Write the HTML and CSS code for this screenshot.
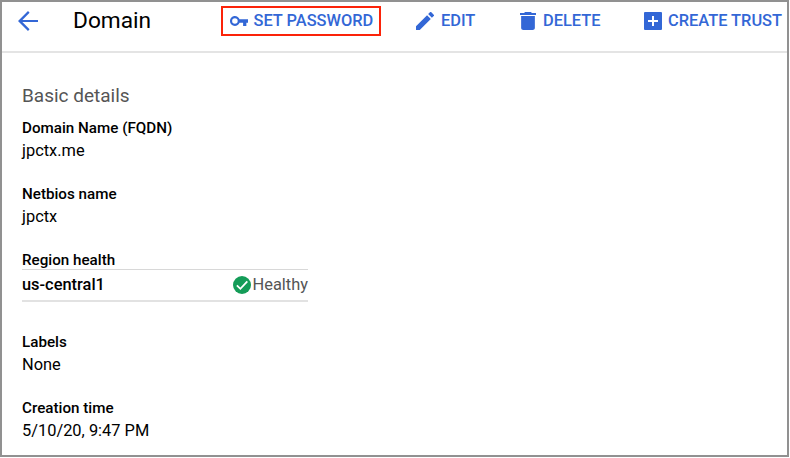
FILE: index.html
```html
<!DOCTYPE html>
<html lang="en">
<head>
<meta charset="utf-8">
<title>Domain</title>
<link rel="stylesheet" href="styles.css">
</head>
<body>
<div class="window">
  <header class="toolbar">
    <svg class="back" viewBox="4 4 16 16"><path d="M20 11.200H7.500l5.750-5.750L12 4l-8 8 8 8 1.250-1.450L7.500 12.800H20v-1.600z"/></svg>
    <h1 class="title">Domain</h1>
    <a class="action password">
      <svg class="key" viewBox="1 6 22 12"><path d="M12.650 10C11.830 7.670 9.610 6 7 6c-3.310 0-6 2.690-6 6s2.690 6 6 6c2.610 0 4.830-1.670 5.650-4H17v4h4v-4h2v-4H12.650zM7 15.400a3.400 3.400 0 1 1 0-6.800 3.400 3.400 0 0 1 0 6.800z" fill-rule="evenodd"/></svg>
      <span>SET PASSWORD</span>
    </a>
    <a class="action edit">
      <svg class="pencil" viewBox="3 3 18 18"><path d="M3 17.250V21h3.750L17.810 9.940l-3.750-3.750L3 17.250zM20.710 7.040a1 1 0 0 0 0-1.410l-2.340-2.340a1 1 0 0 0-1.410 0l-1.830 1.830 3.750 3.750 1.830-1.830z"/></svg>
      <span>EDIT</span>
    </a>
    <a class="action delete">
      <svg class="trash" viewBox="5 3 14 18" preserveAspectRatio="none"><path d="M6 19c0 1.100.9 2 2 2h8c1.100 0 2-.9 2-2V7H6v12zM19 4h-3.500l-1-1h-5l-1 1H5v2h14V4z"/></svg>
      <span>DELETE</span>
    </a>
    <a class="action create">
      <svg class="plus" viewBox="3 3 18 18"><path d="M20 3H4a1 1 0 0 0-1 1v16a1 1 0 0 0 1 1h16a1 1 0 0 0 1-1V4a1 1 0 0 0-1-1zm-3 10h-4v4h-2v-4H7v-2h4V7h2v4h4v2z"/></svg>
      <span>CREATE TRUST</span>
    </a>
  </header>
  <main class="details">
    <h2 class="heading">Basic details</h2>
    <dl class="list">
      <div class="field"><dt>Domain Name (FQDN)</dt><dd>jpctx.me</dd></div>
      <div class="field"><dt>Netbios name</dt><dd>jpctx</dd></div>
      <div class="field region">
        <dt>Region health</dt>
        <dd class="row">
          <span class="zone">us-central1</span>
          <span class="status"><svg class="check" viewBox="2 2 20 20"><circle cx="12" cy="12" r="10"/><path d="M6.300 12.300l3.900 3.900 7.700-8.200"/></svg>Healthy</span>
        </dd>
      </div>
      <div class="field"><dt>Labels</dt><dd>None</dd></div>
      <div class="field"><dt>Creation time</dt><dd>5/10/20, 9:47 PM</dd></div>
    </dl>
  </main>
</div>
</body>
</html>
```
FILE: styles.css
```css
* { box-sizing: border-box; }
body { margin: 0; background: #fff; font-family: Roboto, sans-serif; color: #000; }
.window {
  width: 789px;
  height: 457px;
  border: 2px solid #919191;
  overflow: hidden;
}
.toolbar {
  display: flex;
  align-items: flex-start;
  height: 51px;
  border-bottom: 2px solid #e4e4e4;
  white-space: nowrap;
}
svg { display: block; flex: none; fill: #3367d6; }
.back { width: 20px; height: 20px; margin: 9px 0 0 15.500px; }
.title { width: 148px; margin: 5px 0 0 35.500px; font-size: 22.700px; line-height: 28px; font-weight: 400; }
.action {
  display: flex;
  align-items: center;
  height: 30px;
  margin-top: 4px;
  color: #3367d6;
  font-size: 16.400px;
  line-height: 20px;
  font-weight: 500;
}
.password { width: 160px; border: 2px solid #fb2309; padding-left: 6.500px; }
.key { width: 18px; height: 10px; margin-right: 6px; }
.edit { width: 104px; margin-left: 35px; }
.pencil { width: 18px; height: 18px; margin-right: 7px; }
.delete { width: 124px; }
.trash { width: 16px; height: 18px; margin-right: 7px; }
.plus { width: 18px; height: 18px; margin-right: 6px; }
.details { padding: 31px 0 0 20px; }
.heading { margin: 0 0 10px; font-size: 19px; line-height: 24px; font-weight: 400; color: #555; }
.list { margin: 0; }
.field { height: 66px; }
dt { font-size: 15.200px; line-height: 20px; font-weight: 500; }
dd { margin: 2px 0 0; font-size: 16.400px; line-height: 22px; }
.region { height: 82px; }
.row {
  display: flex;
  justify-content: space-between;
  align-items: center;
  width: 286px;
  height: 33px;
  margin-top: -1px;
  border-top: 1px solid #d8d8d8;
  border-bottom: 2px solid #e2e2e2;
}
.zone { font-weight: 500; }
.status { display: flex; align-items: center; color: #555; }
.check { width: 18px; height: 18px; margin-right: 2px; fill: #149c58; }
.check path { fill: none; stroke: #fff; stroke-width: 2; }
```
